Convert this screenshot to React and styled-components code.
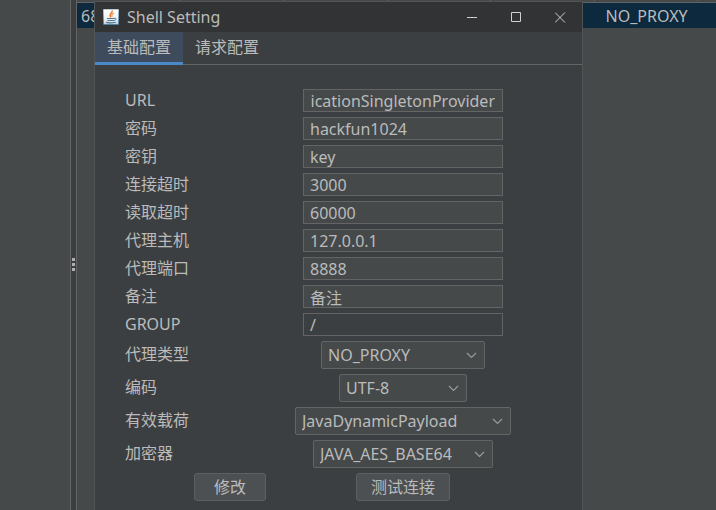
import React, { useState } from "react";
import styled, { createGlobalStyle } from "styled-components";

const GlobalStyle = createGlobalStyle`
  :root {
    --pane: #45494a;
    --panel: #3c3f41;
    --line: #646464;
    --text: #bbbbbb;
  }

  * {
    box-sizing: border-box;
  }

  body {
    margin: 0;
    background: var(--pane);
    color: var(--text);
    font-family: "Noto Sans", "Noto Sans CJK SC", sans-serif;
    font-size: 16px;
    line-height: 20px;
  }

  button,
  input,
  select {
    font: inherit;
    color: inherit;
    margin: 0;
  }
`;

// Main window
const Desktop = styled.div`
  display: flex;
  height: 100vh;
  position: relative;
  overflow: hidden;
`;

const SidePane = styled.div`
  flex: 0 0 70px;
`;

const Divider = styled.div`
  flex: 0 0 7px;
  display: flex;
  flex-direction: column;
  align-items: center;
  justify-content: center;
  gap: 2px;
  padding-top: 18px;
  background: var(--panel);
  border: solid var(--line);
  border-width: 0 1px;
`;

const Grip = styled.span`
  width: 3px;
  height: 3px;
  background: #afafaf;
`;

const TablePane = styled.div`
  flex: 1;
  min-width: 0;
  overflow: hidden;
`;

const ShellTable = styled.table`
  width: 725px;
  table-layout: fixed;
  border-collapse: separate;
  border-spacing: 0;

  th {
    height: 3px;
    padding: 0;
    border-bottom: 1px solid var(--line);
    background: linear-gradient(var(--line), var(--line)) right top / 1px 1px
      no-repeat;
  }

  td {
    height: 25px;
    padding: 0 4px;
    background: #0d293e;
    text-align: center;
  }

  td:first-child {
    text-align: left;
  }
`;

// Dialog
const Dialog = styled.section`
  position: absolute;
  top: 1px;
  left: 94px;
  right: 133px;
  min-height: 100%;
  background: var(--panel);
  border: 1px solid #525557;
`;

const TitleBar = styled.header`
  display: flex;
  align-items: center;
  height: 30px;
  padding-left: 8px;
  background: #313335;
`;

const Title = styled.h1`
  flex: 1;
  margin: 0 0 0 8px;
  font-size: 16px;
  font-weight: 400;
`;

const WindowButton = styled.button`
  display: flex;
  align-items: center;
  justify-content: center;
  width: 44px;
  height: 30px;
  padding: 0;
  border: 0;
  background: none;
`;

const TabBar = styled.nav`
  display: flex;
  height: 33px;
  border-bottom: 1px solid var(--line);
`;

const Tab = styled.button`
  height: 33px;
  padding: 0 12px;
  border: 0;
  border-bottom: 3px solid ${(props) => (props.$active ? "#4a88c7" : "transparent")};
  background: ${(props) => (props.$active ? "#3d4b5c" : "none")};
  background-clip: padding-box;
`;

const Form = styled.form`
  display: grid;
  gap: 5px;
  padding: 24px 71px 8px 30px;
`;

const Row = styled.div`
  display: grid;
  grid-template-columns: 1fr 216px;
  align-items: center;
  justify-items: start;

  label {
    padding-bottom: 2px;
  }
`;

const Field = styled.input`
  justify-self: center;
  width: 200px;
  height: 23px;
  padding: 1px 7px 0 6px;
  border: 1px solid var(--line);
  border-radius: 0;
  outline: 0;
  background: ${(props) => (props.readOnly ? "var(--panel)" : "var(--pane)")};
  text-align: ${(props) => props.$align || "left"};
`;

const Combo = styled.div`
  justify-self: center;
  position: relative;
  width: ${(props) => props.$width}px;

  select {
    appearance: none;
    display: block;
    width: 100%;
    height: 28px;
    padding: 0 24px 0 6px;
    border: 1px solid var(--line);
    border-radius: 2px;
    outline: 0;
    background: var(--pane);
  }

  svg {
    position: absolute;
    right: 8px;
    top: 11px;
    pointer-events: none;
  }
`;

const Actions = styled.div`
  display: flex;
  gap: 90px;
  padding-left: 69px;
`;

const PushButton = styled.button`
  height: 28px;
  min-width: 72px;
  padding: 0 14px;
  border: 1px solid #5e6060;
  border-radius: 3px;
  background: #4c5052;
`;

const JavaIcon = () => (
  <svg width="16" height="16" viewBox="0 0 16 16" aria-hidden="true">
    <defs>
      <linearGradient id="java-box" x1="0" y1="0" x2="0" y2="1">
        <stop offset="0" stopColor="#ffffff" />
        <stop offset="0.6" stopColor="#eef2f5" />
        <stop offset="1" stopColor="#c3d3de" />
      </linearGradient>
      <linearGradient id="java-edge" x1="0" y1="0" x2="0" y2="1">
        <stop offset="0" stopColor="#b9ccd8" />
        <stop offset="1" stopColor="#4f7f9f" />
      </linearGradient>
    </defs>
    <rect width="16" height="16" rx="1" fill="url(#java-edge)" />
    <rect x="1" y="1" width="14" height="14" fill="url(#java-box)" />
    <g fill="none" strokeLinecap="round">
      <path d="M9.2 2C9.6 4 5.6 4.6 7.6 8" stroke="#e8762c" strokeWidth="1.4" />
      <path d="M10.6 4.4C8.4 5 8.6 6 9 7.6" stroke="#f09a4e" strokeWidth="1.1" />
      <path d="M4.4 9.5h6.4M5 11.5h5.4" stroke="#4b7793" strokeWidth="1.2" />
      <path d="M11.4 9.2c2.4-.4 2.2 1.9-.2 2.3" stroke="#4b7793" strokeWidth="1" />
      <path d="M3.6 13.4c2.6.6 6.4.6 8.8-.1" stroke="#4b7793" strokeWidth="1.1" />
    </g>
  </svg>
);

const Chevron = () => (
  <svg width="11" height="7" viewBox="0 0 11 7" aria-hidden="true">
    <path d="M1 1l4.5 4.5L10 1" fill="none" stroke="#9a9da0" strokeWidth="1.1" />
  </svg>
);

const WindowGlyph = ({ d }) => (
  <svg width="11" height="11" viewBox="0 0 11 11" aria-hidden="true">
    <path d={d} fill="none" stroke="#d0d0d0" strokeWidth="1" />
  </svg>
);

const windowButtons = [
  { label: "Minimize", d: "M0 5.5h10" },
  { label: "Maximize", d: "M.5 .5h9v9h-9z" },
  { label: "Close", d: "M0 .5l10 10M10 .5l-10 10" },
];

const tableCells = ["68", "", "", "", "", "NO_PROXY", ""];

const fields = [
  { id: "url", label: "URL", value: "icationSingletonProvider", align: "right" },
  { id: "password", label: "密码", value: "hackfun1024" },
  { id: "secretKey", label: "密钥", value: "key" },
  { id: "connTimeout", label: "连接超时", value: "3000" },
  { id: "readTimeout", label: "读取超时", value: "60000" },
  { id: "proxyHost", label: "代理主机", value: "127.0.0.1" },
  { id: "proxyPort", label: "代理端口", value: "8888" },
  { id: "remark", label: "备注", value: "备注" },
  { id: "group", label: "GROUP", value: "/", readOnly: true },
];

const combos = [
  { id: "proxyType", label: "代理类型", value: "NO_PROXY", width: 164 },
  { id: "encoding", label: "编码", value: "UTF-8", width: 128 },
  { id: "payload", label: "有效载荷", value: "JavaDynamicPayload", width: 216 },
  { id: "cryption", label: "加密器", value: "JAVA_AES_BASE64", width: 180 },
];

const tabs = ["基础配置", "请求配置"];

const App = () => {
  const [activeTab, setActiveTab] = useState(0);

  return (
    <>
      <GlobalStyle />
      <Desktop>
        <SidePane />
        <Divider>
          <Grip />
          <Grip />
          <Grip />
        </Divider>
        <TablePane>
          <ShellTable>
            <thead>
              <tr>
                {tableCells.map((cell, i) => (
                  <th key={i} />
                ))}
              </tr>
            </thead>
            <tbody>
              <tr>
                {tableCells.map((cell, i) => (
                  <td key={i}>{cell}</td>
                ))}
              </tr>
            </tbody>
          </ShellTable>
        </TablePane>

        <Dialog>
          <TitleBar>
            <JavaIcon />
            <Title>Shell Setting</Title>
            {windowButtons.map((btn) => (
              <WindowButton key={btn.label} aria-label={btn.label}>
                <WindowGlyph d={btn.d} />
              </WindowButton>
            ))}
          </TitleBar>
          <TabBar>
            {tabs.map((tab, i) => (
              <Tab key={tab} $active={i === activeTab} onClick={() => setActiveTab(i)}>
                {tab}
              </Tab>
            ))}
          </TabBar>
          <Form onSubmit={(e) => e.preventDefault()}>
            {fields.map((field) => (
              <Row key={field.id}>
                <label htmlFor={field.id}>{field.label}</label>
                <Field
                  id={field.id}
                  defaultValue={field.value}
                  readOnly={field.readOnly}
                  $align={field.align}
                />
              </Row>
            ))}
            {combos.map((combo) => (
              <Row key={combo.id}>
                <label htmlFor={combo.id}>{combo.label}</label>
                <Combo $width={combo.width}>
                  <select id={combo.id} defaultValue={combo.value}>
                    <option>{combo.value}</option>
                  </select>
                  <Chevron />
                </Combo>
              </Row>
            ))}
            <Actions>
              <PushButton type="submit">修改</PushButton>
              <PushButton type="button">测试连接</PushButton>
            </Actions>
          </Form>
        </Dialog>
      </Desktop>
    </>
  );
};

export default App;
